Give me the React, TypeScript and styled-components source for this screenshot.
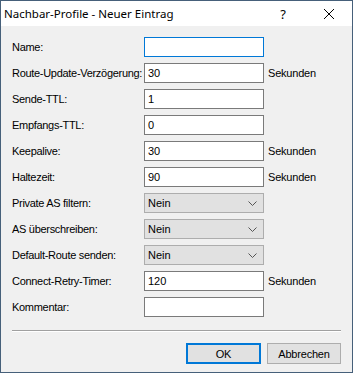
import React from "react";
import styled, { createGlobalStyle } from "styled-components";

const GlobalStyle = createGlobalStyle`
  html, body {
    margin: 0;
    padding: 0;
    background: #f0f0f0;
  }
`;

const Window = styled.div`
  width: 353px;
  height: 373px;
  box-sizing: border-box;
  border: 1px solid #46607a;
  background: #f0f0f0;
  display: flex;
  flex-direction: column;
  font-family: "Liberation Sans", Arial, sans-serif;
  font-size: 11px;
  color: #000;
`;

const TitleBar = styled.div`
  height: 25px;
  background: #ffffff;
  display: flex;
  align-items: center;
  padding-left: 3px;
  font-family: "Noto Sans", "Open Sans", sans-serif;
  font-size: 11.5px;
`;

const Title = styled.div`
  flex: 1;
`;

const TitleButton = styled.div`
  width: 46px;
  height: 25px;
  display: flex;
  align-items: center;
  justify-content: center;
  font-size: 13px;
`;

const Form = styled.div`
  display: grid;
  grid-template-columns: 132px 120px 1fr;
  grid-auto-rows: 20px;
  row-gap: 6px;
  padding: 11px 11px 0 11px;
`;

const Label = styled.div`
  display: flex;
  align-items: center;
  white-space: nowrap;
  letter-spacing: -0.3px;
`;

const Unit = styled.div`
  display: flex;
  align-items: center;
  padding-left: 4px;
  letter-spacing: -0.2px;
`;

const Input = styled.div<{ $focus?: boolean }>`
  box-sizing: border-box;
  height: 20px;
  border: 1px solid ${(p) => (p.$focus ? "#0078d7" : "#7a7a7a")};
  background: #fff;
  display: flex;
  align-items: center;
  padding-left: 3px;
`;

const Select = styled.div`
  box-sizing: border-box;
  height: 20px;
  border: 1px solid #adadad;
  background: #e1e1e1;
  display: flex;
  align-items: center;
  justify-content: space-between;
  padding: 0 6px 0 3px;
`;

const Separator = styled.div`
  margin: 13px 11px 0 11px;
  height: 1px;
  background: #a0a0a0;
  border-bottom: 1px solid #ffffff;
`;

const ButtonRow = styled.div`
  display: flex;
  justify-content: flex-end;
  gap: 6px;
  padding: 11px 11px 0 0;
`;

const Button = styled.div<{ $default?: boolean; $w: number }>`
  box-sizing: border-box;
  width: ${(p) => p.$w}px;
  height: 21px;
  background: #e1e1e1;
  border: ${(p) => (p.$default ? "2px solid #0078d7" : "1px solid #adadad")};
  display: flex;
  align-items: center;
  justify-content: center;
  letter-spacing: -0.2px;
`;

const Chevron = () => (
  <svg width="9" height="5" viewBox="0 0 9 5">
    <path d="M0.5 0.5 L4.5 4.5 L8.5 0.5" fill="none" stroke="#555" strokeWidth="1" />
  </svg>
);

const CloseIcon = () => (
  <svg width="10" height="10" viewBox="0 0 10 10">
    <path d="M0 0 L10 10 M10 0 L0 10" stroke="#000" strokeWidth="1" />
  </svg>
);

type Row =
  | { label: string; kind: "input"; value: string; unit?: boolean; focus?: boolean }
  | { label: string; kind: "select"; value: string };

const rows: Row[] = [
  { label: "Name:", kind: "input", value: "", focus: true },
  { label: "Route-Update-Verzögerung:", kind: "input", value: "30", unit: true },
  { label: "Sende-TTL:", kind: "input", value: "1" },
  { label: "Empfangs-TTL:", kind: "input", value: "0" },
  { label: "Keepalive:", kind: "input", value: "30", unit: true },
  { label: "Haltezeit:", kind: "input", value: "90", unit: true },
  { label: "Private AS filtern:", kind: "select", value: "Nein" },
  { label: "AS überschreiben:", kind: "select", value: "Nein" },
  { label: "Default-Route senden:", kind: "select", value: "Nein" },
  { label: "Connect-Retry-Timer:", kind: "input", value: "120", unit: true },
  { label: "Kommentar:", kind: "input", value: "" },
];

export default function App() {
  return (
    <>
      <GlobalStyle />
      <Window>
        <TitleBar>
          <Title>Nachbar-Profile - Neuer Eintrag</Title>
          <TitleButton>?</TitleButton>
          <TitleButton>
            <CloseIcon />
          </TitleButton>
        </TitleBar>
        <Form>
          {rows.map((r) => (
            <React.Fragment key={r.label}>
              <Label>{r.label}</Label>
              {r.kind === "input" ? (
                <Input $focus={r.focus}>{r.value}</Input>
              ) : (
                <Select>
                  {r.value}
                  <Chevron />
                </Select>
              )}
              <Unit>{r.kind === "input" && r.unit ? "Sekunden" : ""}</Unit>
            </React.Fragment>
          ))}
        </Form>
        <Separator />
        <ButtonRow>
          <Button $default $w={75}>OK</Button>
          <Button $w={74}>Abbrechen</Button>
        </ButtonRow>
      </Window>
    </>
  );
}
